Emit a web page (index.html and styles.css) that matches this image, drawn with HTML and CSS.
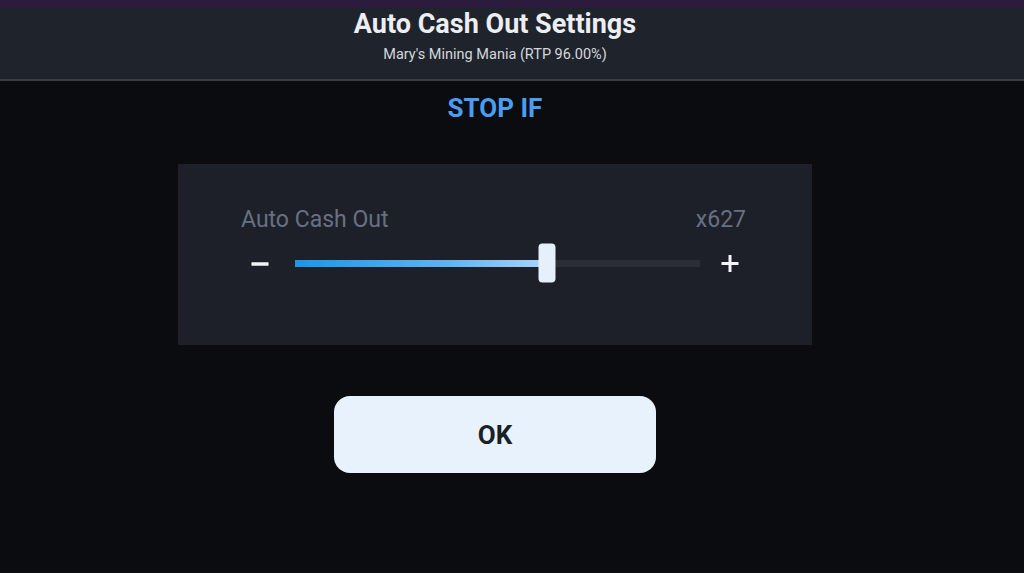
FILE: index.html
```html
<!DOCTYPE html>
<html lang="en">
  <head>
    <meta charset="UTF-8" />
    <meta name="viewport" content="width=device-width, initial-scale=1.0" />
    <title>Auto Cash Out Settings</title>
    <link rel="stylesheet" href="styles.css">
  </head>
  <body>
    <div class="header">
      <div class="header-inner">
        <div class="title">Auto Cash Out Settings</div>
        <div class="subtitle">Mary's Mining Mania (RTP 96.00%)</div>
      </div>
    </div>

    <div class="content">
      <div class="section-title">STOP IF</div>

      <div class="card">
        <div class="card-row">
          <div class="label">Auto Cash Out</div>
          <div class="value">x627</div>
        </div>
        <div class="slider-row">
          <button class="step-btn minus">
            <svg width="18" height="18" viewBox="0 0 18 18" fill="none" stroke="currentColor" stroke-width="3.5">
              <path d="M0.5 10h17" />
            </svg>
          </button>
          <div class="slider">
            <div class="slider-fill" style="width: 62.3%"></div>
            <div class="slider-thumb" style="left: 62.3%"></div>
          </div>
          <button class="step-btn plus">
            <svg width="18" height="18" viewBox="0 0 18 18" fill="none" stroke="currentColor" stroke-width="3">
              <path d="M0.5 9.5h17M9 1v17" />
            </svg>
          </button>
        </div>
      </div>

      <button class="ok-btn">OK</button>
    </div>
  </body>
</html>
```

FILE: styles.css
```css
* {
  margin: 0;
  padding: 0;
  box-sizing: border-box;
}

body {
  width: 1024px;
  height: 573px;
  background: #0b0c10;
  font-family: Roboto, "Noto Sans", sans-serif;
  color: rgba(255, 255, 255, 0.9);
  overflow: hidden;
}

.header {
  background: #1f232b;
  border-top: 8px solid #2b1b3d;
  border-bottom: 2px solid #3a3d46;
  height: 81px;
}

.header-inner {
  padding-right: 34px;
  text-align: center;
}

.title {
  font-size: 27px;
  font-weight: 700;
  color: #eceef2;
  line-height: 32px;
}

.subtitle {
  font-size: 14.5px;
  color: #d4d7de;
  margin-top: 6px;
  line-height: 17px;
}

.content {
  padding-right: 34px;
  display: flex;
  flex-direction: column;
  align-items: center;
}

.section-title {
  margin-top: 11px;
  font-size: 26px;
  font-weight: 700;
  color: #4a9df0;
  line-height: 32px;
}

.card {
  margin-top: 40px;
  width: 634px;
  height: 181px;
  background: #1d2028;
  padding: 42px 66px 0 63px;
}

.card-row {
  display: flex;
  justify-content: space-between;
  align-items: center;
  font-size: 23px;
  color: #687083;
  line-height: 27px;
}

.slider-row {
  display: flex;
  align-items: center;
  margin-top: 10px;
  height: 40px;
}

.step-btn {
  background: none;
  border: none;
  color: #f2f4f8;
  display: flex;
  align-items: center;
}

.step-btn.minus {
  width: 54px;
  padding-left: 10px;
}

.step-btn.plus {
  width: 46px;
  padding-left: 21px;
}

.slider {
  flex: 1;
  position: relative;
  height: 7px;
  background: #292e38;
}

.slider-fill {
  height: 100%;
  background: linear-gradient(90deg, #1a97e6 0%, #5fb2f2 60%, #a8d4fa 100%);
}

.slider-thumb {
  position: absolute;
  top: 50%;
  width: 17px;
  height: 39px;
  transform: translate(-50%, -50%);
  background: #e6f0fb;
  border-radius: 4px;
}

.ok-btn {
  margin-top: 51px;
  width: 322px;
  height: 77px;
  border: none;
  border-radius: 16px;
  background: #e8f2fd;
  color: #1b1f27;
  font-family: Roboto, "Noto Sans", sans-serif;
  font-size: 26px;
  font-weight: 700;
}
```
